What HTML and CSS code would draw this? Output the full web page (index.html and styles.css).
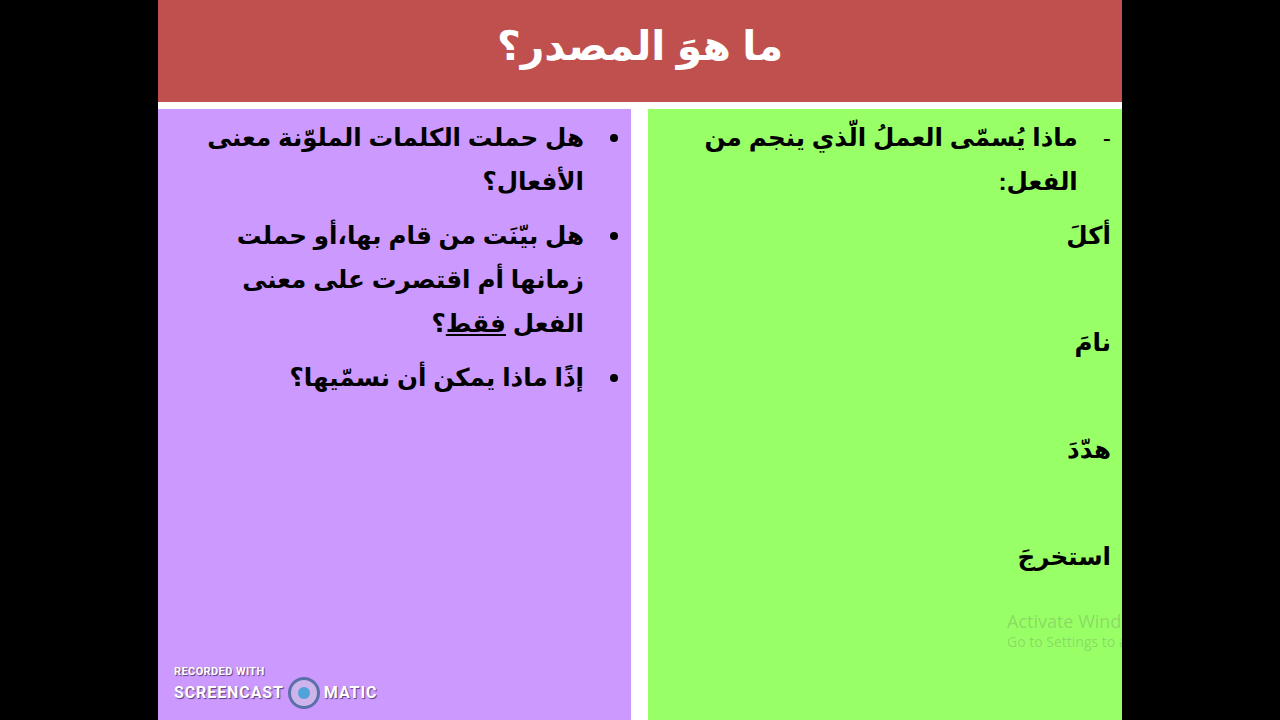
FILE: index.html
```html
<!DOCTYPE html>
<html lang="ar" dir="rtl">
<head>
    <meta charset="UTF-8">
    <meta name="viewport" content="width=device-width, initial-scale=1.0">
    <title>ما هوَ المصدر؟</title>
    <link rel="stylesheet" href="styles.css">
</head>
<body>
    <div class="slide">
        <!-- Title -->
        <header class="slide-title">
            <h1>ما هوَ المصدر؟</h1>
        </header>

        <!-- Columns -->
        <div class="columns">
            <section class="col col-green">
                <p class="question"><span class="dash">-</span><span>ماذا يُسمّى العملُ الّذي ينجم من الفعل:</span></p>
                <ul class="verbs">
                    <li>أكلَ</li>
                    <li>نامَ</li>
                    <li>هدّدَ</li>
                    <li>استخرجَ</li>
                </ul>
                <div class="activate">
                    <div class="activate-title">Activate Windows</div>
                    <div class="activate-sub">Go to Settings to activate Windows.</div>
                </div>
            </section>

            <section class="col col-purple">
                <ul class="points">
                    <li><span>هل حملت الكلمات الملوّنة معنى الأفعال؟</span></li>
                    <li><span>هل بيّنَت من قام بها،أو حملت زمانها أم اقتصرت على معنى الفعل <u>فقط</u>؟</span></li>
                    <li><span>إذًا ماذا يمكن أن نسمّيها؟</span></li>
                </ul>
                <div class="watermark" dir="ltr">
                    <div class="watermark-top">RECORDED WITH</div>
                    <div class="watermark-main">
                        <span>SCREENCAST</span>
                        <svg width="34" height="34" viewBox="0 0 34 34">
                            <circle cx="17" cy="17" r="14.5" fill="#cdb4ea" stroke="#5a70a8" stroke-width="3"/>
                            <circle cx="17" cy="17" r="6" fill="#4fa3d8"/>
                        </svg>
                        <span>MATIC</span>
                    </div>
                </div>
            </section>
        </div>
    </div>
</body>
</html>
```

FILE: styles.css
```css
* {
    margin: 0;
    padding: 0;
    box-sizing: border-box;
}

html, body {
    height: 100%;
    overflow: hidden;
}

body {
    background: #000;
    font-family: 'Liberation Sans', 'DejaVu Sans', sans-serif;
    color: #000;
}

.slide {
    width: 964px;
    height: 720px;
    margin: 0 auto;
    background: #fff;
    display: flex;
    flex-direction: column;
}

/* Title */
.slide-title {
    height: 102px;
    flex-shrink: 0;
    background: #c0504d;
    display: flex;
    justify-content: center;
    align-items: center;
    padding-bottom: 10px;
}

.slide-title h1 {
    font-size: 41px;
    font-weight: 700;
    color: #fff;
}

/* Columns */
.columns {
    flex: 1;
    display: flex;
    gap: 17px;
    margin-top: 7px;
}

.col {
    position: relative;
    overflow: hidden;
    font-size: 24.6px;
    font-weight: 700;
    line-height: 44px;
}

.col-green {
    width: 474px;
    background: #99ff66;
    padding: 7px 11px 0 40px;
}

.col-purple {
    width: 473px;
    background: #cc99ff;
    padding: 7px 13px 0 40px;
}

/* Green column */
.question {
    display: flex;
    gap: 25px;
}

.dash {
    font-weight: 400;
}

.verbs {
    list-style: none;
    margin-top: 10px;
}

.verbs li {
    height: 107px;
}

.activate {
    position: absolute;
    left: 359px;
    top: 501px;
    width: 300px;
    direction: ltr;
    text-align: left;
    font-family: 'Open Sans', sans-serif;
    font-weight: 400;
    color: rgba(100, 130, 100, 0.3);
    line-height: 1.3;
}

.activate-title {
    font-size: 18px;
}

.activate-sub {
    font-size: 14px;
}

/* Purple column */
.points {
    list-style: none;
}

.points li {
    display: flex;
    gap: 26px;
    margin-bottom: 10px;
}

.points li::before {
    content: '';
    flex-shrink: 0;
    width: 8px;
    height: 8px;
    margin-top: 18px;
    border-radius: 50%;
    background: #000;
}

.watermark {
    position: absolute;
    left: 16px;
    bottom: 10px;
    color: #fff;
    font-family: 'Roboto', sans-serif;
    font-weight: 700;
    line-height: 1;
    text-shadow: 1px 1px 1px rgba(60, 40, 90, 0.8);
}

.watermark-top {
    font-size: 11px;
    letter-spacing: 0.4px;
    margin-bottom: -1px;
}

.watermark-main {
    display: flex;
    align-items: center;
    gap: 3px;
    font-size: 16px;
    letter-spacing: 0.9px;
}
```
